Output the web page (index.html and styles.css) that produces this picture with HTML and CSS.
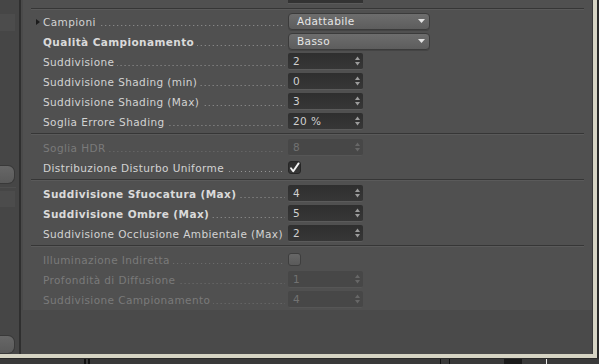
FILE: index.html
```html
<!DOCTYPE html>
<html lang="it">
<head>
  <meta charset="utf-8">
  <meta name="viewport" content="width=device-width, initial-scale=1.0">
  <title>Impostazioni Rendering</title>
  <link rel="stylesheet" href="styles.css">
</head>
<body>
  <div class="screen">
    <div class="upper">
      <div class="window">
        <aside class="sidebar">
          <div class="side-slot side-slot-top"></div>
          <div class="side-btn side-btn-mid"></div>
          <div class="side-rule"></div>
          <div class="side-slot"></div>
          <div class="side-btn side-btn-low"></div>
        </aside>

        <main class="main">
          <section class="settings">
            <div class="stub"><span class="stub-field"></span></div>
            <div class="rule rule-top"></div>

            <div class="row">
              <div class="label"><span class="twisty"></span><span class="text">Campioni</span><span class="dots"></span></div>
              <div class="select">Adattabile
                <svg class="select-arrow" width="7" height="4" viewBox="0 0 7 4"><polygon points="0,0 7,0 3.5,4"/></svg>
              </div>
            </div>
            <div class="row">
              <div class="label bold"><span class="text">Qualità Campionamento</span><span class="dots"></span></div>
              <div class="select">Basso
                <svg class="select-arrow" width="7" height="4" viewBox="0 0 7 4"><polygon points="0,0 7,0 3.5,4"/></svg>
              </div>
            </div>
            <div class="row">
              <div class="label"><span class="text">Suddivisione</span><span class="dots"></span></div>
              <div class="num">2<svg class="spin" width="5" height="10" viewBox="0 0 5 10"><polygon points="0,4 2.5,0.5 5,4"/><polygon points="0,6 2.5,9.5 5,6"/></svg></div>
            </div>
            <div class="row">
              <div class="label"><span class="text">Suddivisione Shading (min)</span><span class="dots"></span></div>
              <div class="num">0<svg class="spin" width="5" height="10" viewBox="0 0 5 10"><polygon points="0,4 2.5,0.5 5,4"/><polygon points="0,6 2.5,9.5 5,6"/></svg></div>
            </div>
            <div class="row">
              <div class="label"><span class="text">Suddivisione Shading (Max)</span><span class="dots"></span></div>
              <div class="num">3<svg class="spin" width="5" height="10" viewBox="0 0 5 10"><polygon points="0,4 2.5,0.5 5,4"/><polygon points="0,6 2.5,9.5 5,6"/></svg></div>
            </div>
            <div class="row">
              <div class="label"><span class="text">Soglia Errore Shading</span><span class="dots"></span></div>
              <div class="num">20 %<svg class="spin" width="5" height="10" viewBox="0 0 5 10"><polygon points="0,4 2.5,0.5 5,4"/><polygon points="0,6 2.5,9.5 5,6"/></svg></div>
            </div>

            <div class="rule"></div>

            <div class="row disabled">
              <div class="label"><span class="text">Soglia HDR</span><span class="dots"></span></div>
              <div class="num">8<svg class="spin" width="5" height="10" viewBox="0 0 5 10"><polygon points="0,4 2.5,0.5 5,4"/><polygon points="0,6 2.5,9.5 5,6"/></svg></div>
            </div>
            <div class="row">
              <div class="label"><span class="text">Distribuzione Disturbo Uniforme</span><span class="dots"></span></div>
              <div class="check on">
                <svg width="13" height="13" viewBox="0 0 13 13"><path d="M3 7.2 L5.2 10.3 L10.6 2.4"/></svg>
              </div>
            </div>

            <div class="rule"></div>

            <div class="row">
              <div class="label bold"><span class="text">Suddivisione Sfuocatura (Max)</span><span class="dots"></span></div>
              <div class="num">4<svg class="spin" width="5" height="10" viewBox="0 0 5 10"><polygon points="0,4 2.5,0.5 5,4"/><polygon points="0,6 2.5,9.5 5,6"/></svg></div>
            </div>
            <div class="row">
              <div class="label bold"><span class="text">Suddivisione Ombre (Max)</span><span class="dots"></span></div>
              <div class="num">5<svg class="spin" width="5" height="10" viewBox="0 0 5 10"><polygon points="0,4 2.5,0.5 5,4"/><polygon points="0,6 2.5,9.5 5,6"/></svg></div>
            </div>
            <div class="row">
              <div class="label"><span class="text">Suddivisione Occlusione Ambientale (Max)</span><span class="dots"></span></div>
              <div class="num">2<svg class="spin" width="5" height="10" viewBox="0 0 5 10"><polygon points="0,4 2.5,0.5 5,4"/><polygon points="0,6 2.5,9.5 5,6"/></svg></div>
            </div>

            <div class="rule"></div>

            <div class="row disabled">
              <div class="label"><span class="text">Illuminazione Indiretta</span><span class="dots"></span></div>
              <div class="check"></div>
            </div>
            <div class="row disabled">
              <div class="label"><span class="text">Profondità di Diffusione</span><span class="dots"></span></div>
              <div class="num">1<svg class="spin" width="5" height="10" viewBox="0 0 5 10"><polygon points="0,4 2.5,0.5 5,4"/><polygon points="0,6 2.5,9.5 5,6"/></svg></div>
            </div>
            <div class="row disabled">
              <div class="label"><span class="text">Suddivisione Campionamento</span><span class="dots"></span></div>
              <div class="num">4<svg class="spin" width="5" height="10" viewBox="0 0 5 10"><polygon points="0,4 2.5,0.5 5,4"/><polygon points="0,6 2.5,9.5 5,6"/></svg></div>
            </div>
          </section>
        </main>
      </div>
      <div class="edge"></div>
    </div>

    <div class="ground">
      <span class="mark mark-a"></span>
      <span class="mark mark-b"></span>
      <span class="mark mark-c"></span>
      <span class="mark mark-d"></span>
      <span class="mark mark-e"></span>
      <span class="mark mark-f"></span>
    </div>
  </div>
</body>
</html>
```

FILE: styles.css
```css
body {
  margin: 0;
  padding: 0;
  background-color: #2c2c2c;
  font-family: "DejaVu Sans", Verdana, sans-serif;
  font-size: 10.5px;
  letter-spacing: 0.4px;
  overflow: hidden;
}

.screen {
  width: 599px;
  height: 364px;
  display: flex;
  flex-direction: column;
}

.upper {
  display: flex;
  height: 358px;
}

.window {
  width: 593px;
  height: 354px;
  display: flex;
  border-right: 4px solid #d6d4c4;
  border-bottom: 4px solid #d6d4c4;
}

.edge {
  flex: 1;
  background-color: #2a2a2a;
}

/* left column */

.sidebar {
  width: 19px;
  border-right: 2px solid #2f2f2f;
  background-color: #464646;
  display: flex;
  flex-direction: column;
}

.side-slot {
  width: 15px;
  height: 16px;
  background-color: #4c4c4c;
  margin-top: 3px;
}

.side-slot-top {
  height: 17px;
  margin-top: 14px;
}

.side-btn {
  width: 14px;
  height: 17px;
  border: 1px solid #393939;
  border-left: none;
  border-radius: 0 7px 7px 0;
  background: linear-gradient(#676767, #5a5a5a);
}

.side-btn-mid {
  margin-top: 134px;
}

.side-btn-low {
  margin-top: 128px;
}

.side-rule {
  width: 16px;
  height: 1px;
  margin-top: 3px;
  background-color: #393939;
  border-bottom: 1px solid #4e4e4e;
}

/* main panel */

.main {
  flex: 1;
  background-color: #4a4a4a;
  border-right: 1px solid #3b3b3b;
  padding-left: 2px;
}

.settings {
  background-color: #505050;
  padding-bottom: 1px;
}

.stub {
  height: 4px;
  padding-left: 265px;
}

.stub-field {
  display: block;
  width: 75px;
  height: 3px;
  background-color: #333333;
  border-bottom: 1px solid #5a5a5a;
}

.rule {
  height: 1px;
  margin: 2px 8px 2px 8px;
  background-color: #363636;
  border-bottom: 1px solid #5a5a5a;
}

.rule-top {
  margin-top: 4px;
  margin-bottom: 1px;
}

.row {
  display: grid;
  grid-template-columns: 265px 1fr;
  height: 20px;
  align-items: center;
}

.label {
  display: flex;
  align-items: baseline;
  padding: 1px 3px 0 20px;
  color: #d3d3d3;
  white-space: nowrap;
}

.label.bold {
  font-weight: bold;
  color: #dadada;
}

.twisty {
  align-self: center;
  width: 0;
  height: 0;
  margin-left: -7px;
  margin-right: 3px;
  border-left: 4px solid #1b1b1b;
  border-top: 3.5px solid transparent;
  border-bottom: 3.5px solid transparent;
}

.dots {
  flex: 1;
  height: 1px;
  margin-left: 3px;
  background-image: linear-gradient(to right, #979797 0, #979797 1px, transparent 1px);
  background-size: 4px 1px;
  background-repeat: repeat-x;
  background-position: right bottom;
}

/* fields */

.select {
  width: 128px;
  height: 15px;
  padding: 0 4px 0 8px;
  display: flex;
  align-items: center;
  justify-content: space-between;
  border: 1px solid #3b3b3b;
  border-radius: 4px;
  background: linear-gradient(#6d6d6d, #5d5d5d);
  color: #e6e6e6;
  box-shadow: 0 1px 0 #444444;
}

.select-arrow {
  fill: #e2e2e2;
}

.num {
  width: 67px;
  height: 16px;
  padding: 0 3px 0 5px;
  display: flex;
  align-items: center;
  justify-content: space-between;
  border-radius: 2px;
  background: linear-gradient(#2f2f2f, #373737);
  border-bottom: 1px solid #5b5b5b;
  color: #d0d0d0;
}

.spin {
  fill: #9c9c9c;
}

.check {
  width: 11px;
  height: 11px;
  border: 1px solid #3e3e3e;
  border-radius: 3px;
  background: linear-gradient(#676767, #5a5a5a);
}

.check.on {
  border-color: #262626;
  background: linear-gradient(#2c2c2c, #383838);
  position: relative;
}

.check.on svg {
  position: absolute;
  left: -1px;
  top: -1px;
  fill: none;
  stroke: #f2f2f2;
  stroke-width: 1.9;
  stroke-linecap: round;
  stroke-linejoin: round;
}

.row.disabled .label {
  color: #7a7a7a;
}

.row.disabled .dots {
  background-image: linear-gradient(to right, #6f6f6f 0, #6f6f6f 1px, transparent 1px);
}

.row.disabled .num {
  background: #474747;
  border-bottom-color: #565656;
  color: #727272;
}

.row.disabled .spin {
  fill: #676767;
}

/* strip below the window frame */

.ground {
  flex: 1;
  display: flex;
  align-items: stretch;
  background-color: #393939;
  border-top: 1px solid #2a2a2a;
}

.mark {
  width: 2px;
  background-color: #111111;
}

.mark-a { margin-left: 84px; }
.mark-b { margin-left: 2px; }
.mark-c { margin-left: 350px; width: 1px; }
.mark-d { margin-left: 8px; width: 1px; }
.mark-e { margin-left: 54px; width: 18px; background-color: #1a1a1a; }
.mark-f { margin-left: 24px; width: 1px; background-color: #e8e8e8; }
```
